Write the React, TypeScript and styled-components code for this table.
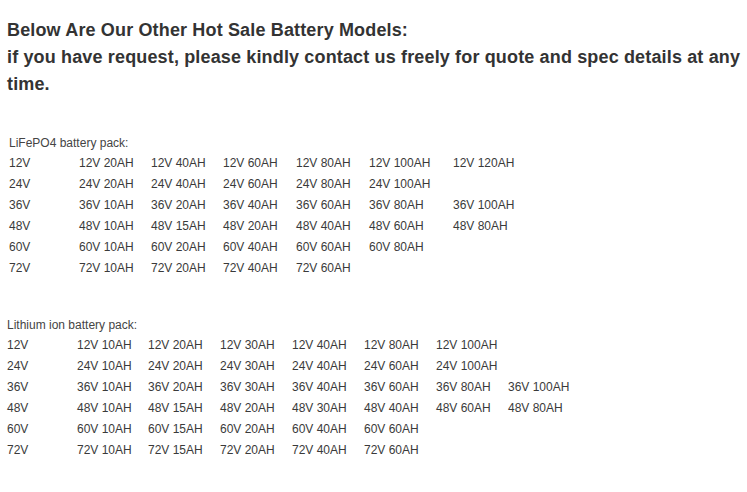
import styled, { createGlobalStyle } from 'styled-components';

const GlobalStyle = createGlobalStyle`
  body {
    margin: 0;
    background: #fff;
    font-family: Arial, "Liberation Sans", sans-serif;
    color: #333;
  }
`;

const Page = styled.div`
  padding: 17px 0 0 7px;
`;

const Intro = styled.p`
  margin: 0 0 36px;
  font-size: 18px;
  letter-spacing: 0.15px;
  font-weight: bold;
  line-height: 27px;
  color: #333;
`;

const Section = styled.section<{ $indent: number }>`
  padding-left: ${(p) => p.$indent}px;
  margin-bottom: 37px;
`;

const Label = styled.div`
  font-size: 12px;
  line-height: 19px;
  color: #444;
`;

const Grid = styled.div<{ $cols: string }>`
  display: grid;
  grid-template-columns: ${(p) => p.$cols};
  font-size: 12px;
  line-height: 21px;
  color: #3a3a3a;
`;

const Cell = styled.span`
  white-space: nowrap;
`;

const lifepo4 = [
  ['12V', '12V 20AH', '12V 40AH', '12V 60AH', '12V 80AH', '12V 100AH', '12V 120AH'],
  ['24V', '24V 20AH', '24V 40AH', '24V 60AH', '24V 80AH', '24V 100AH', ''],
  ['36V', '36V 10AH', '36V 20AH', '36V 40AH', '36V 60AH', '36V 80AH', '36V 100AH'],
  ['48V', '48V 10AH', '48V 15AH', '48V 20AH', '48V 40AH', '48V 60AH', '48V 80AH'],
  ['60V', '60V 10AH', '60V 20AH', '60V 40AH', '60V 60AH', '60V 80AH', ''],
  ['72V', '72V 10AH', '72V 20AH', '72V 40AH', '72V 60AH', '', ''],
];

const lithium = [
  ['12V', '12V 10AH', '12V 20AH', '12V 30AH', '12V 40AH', '12V 80AH', '12V 100AH', ''],
  ['24V', '24V 10AH', '24V 20AH', '24V 30AH', '24V 40AH', '24V 60AH', '24V 100AH', ''],
  ['36V', '36V 10AH', '36V 20AH', '36V 30AH', '36V 40AH', '36V 60AH', '36V 80AH', '36V 100AH'],
  ['48V', '48V 10AH', '48V 15AH', '48V 20AH', '48V 30AH', '48V 40AH', '48V 60AH', '48V 80AH'],
  ['60V', '60V 10AH', '60V 15AH', '60V 20AH', '60V 40AH', '60V 60AH', '', ''],
  ['72V', '72V 10AH', '72V 15AH', '72V 20AH', '72V 40AH', '72V 60AH', '', ''],
];

const BatteryTable = ({
  title,
  rows,
  cols,
  indent,
}: {
  title: string;
  rows: string[][];
  cols: string;
  indent: number;
}) => (
  <Section $indent={indent}>
    <Label>{title}</Label>
    <Grid $cols={cols}>
      {rows.map((row, r) => row.map((cell, c) => <Cell key={`${r}-${c}`}>{cell}</Cell>))}
    </Grid>
  </Section>
);

export default function App() {
  return (
    <>
      <GlobalStyle />
      <Page>
        <Intro>
          Below Are Our Other Hot Sale Battery Models:
          <br />
          if you have request, please kindly contact us freely for quote and spec details at any time.
        </Intro>
        <BatteryTable
          title="LiFePO4 battery pack:"
          rows={lifepo4}
          cols="70px 72px 72px 73px 73px 84px 90px"
          indent={2}
        />
        <BatteryTable
          title="Lithium ion battery pack:"
          rows={lithium}
          cols="70px 71px 72px 72px 72px 72px 72px 80px"
          indent={0}
        />
      </Page>
    </>
  );
}
